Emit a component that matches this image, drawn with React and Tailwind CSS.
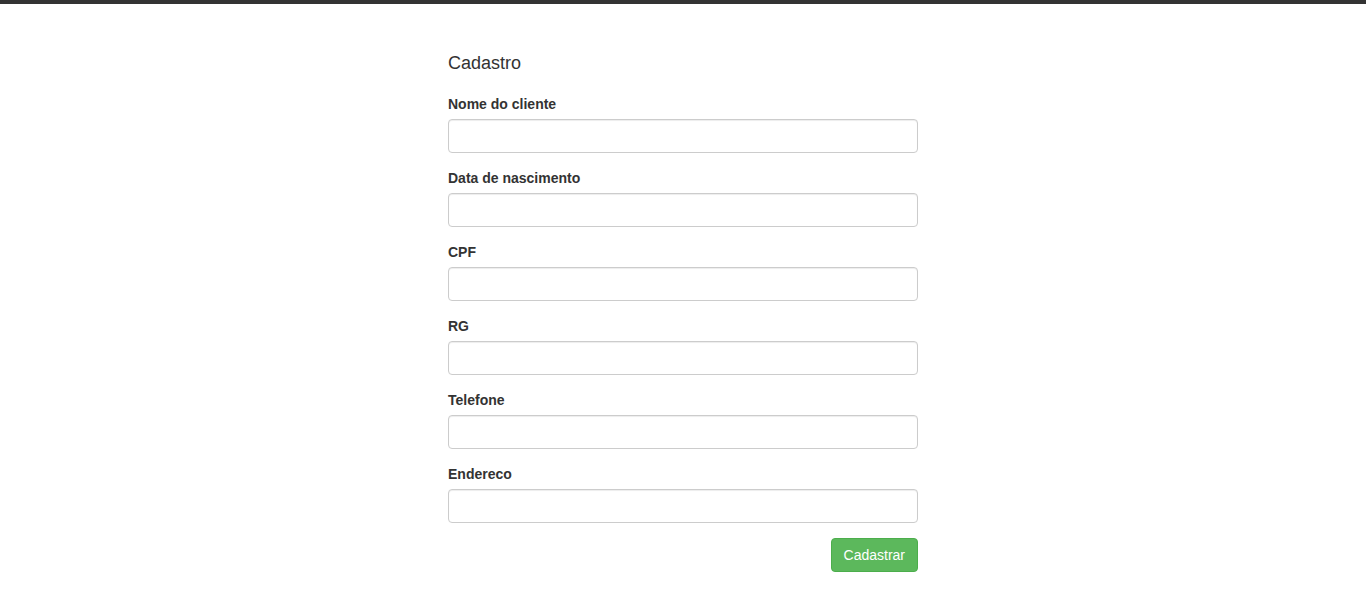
import React from 'react';

const campos = ['Nome do cliente', 'Data de nascimento', 'CPF', 'RG', 'Telefone', 'Endereco'];

export default function App() {
  return (
    <div className="min-h-screen bg-white text-[#333] text-[14px]" style={{ fontFamily: '"Liberation Sans", Arial, sans-serif' }}>
      <div className="h-[4px] bg-[#333]" />
      <div className="w-[470px] mx-auto pt-[49px]">
        <h4 className="text-[18px] leading-[20px] font-normal mb-[21px]">Cadastro</h4>
        <form>
          {campos.map((campo) => (
            <div key={campo} className="mb-[15px]">
              <label className="block font-bold leading-[20px] mb-[5px]">{campo}</label>
              <input
                type="text"
                className="block w-full h-[34px] px-3 border border-[#ccc] rounded-[4px] shadow-[inset_0_1px_1px_rgba(0,0,0,0.075)] focus:outline-none"
              />
            </div>
          ))}
          <div className="flex justify-end">
            <button
              type="button"
              className="h-[34px] px-3 bg-[#5cb85c] border border-[#4cae4c] rounded-[4px] text-white leading-[20px]"
            >
              Cadastrar
            </button>
          </div>
        </form>
      </div>
    </div>
  );
}
